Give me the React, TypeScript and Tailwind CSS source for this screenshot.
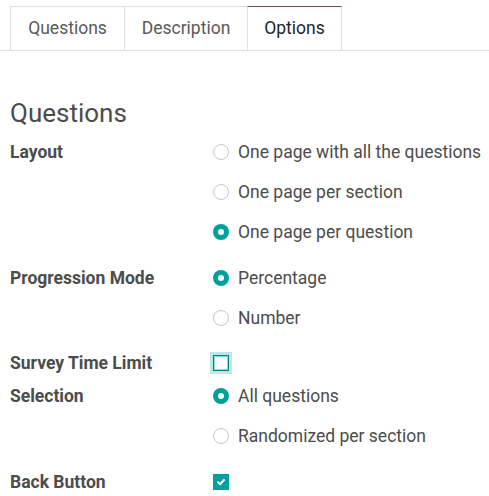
import React from "react";

type Opt = { label: string; checked?: boolean };

function Radio({ checked }: { checked?: boolean }) {
  return checked ? (
    <span className="w-4 h-4 rounded-full bg-[#00a09d] grid place-items-center shrink-0">
      <span className="w-[6px] h-[6px] rounded-full bg-white" />
    </span>
  ) : (
    <span className="w-4 h-4 rounded-full border border-[#c4c7cc] bg-white shrink-0" />
  );
}

function RadioField({ label, options, className = "" }: { label: string; options: Opt[]; className?: string }) {
  return (
    <div className={`flex ${className}`}>
      <div className="w-[203px] shrink-0 h-10 flex items-center font-bold text-[#4c4c4c]">{label}</div>
      <div className="flex flex-col">
        {options.map((o) => (
          <div key={o.label} className="h-10 flex items-center gap-[9px] text-[#4c4c4c] whitespace-nowrap">
            <Radio checked={o.checked} />
            <span>{o.label}</span>
          </div>
        ))}
      </div>
    </div>
  );
}

export default function App() {
  const tabs = [
    { name: "Questions", w: "w-[114px]" },
    { name: "Description", w: "w-[123px]" },
    { name: "Options", w: "w-[95px]", active: true },
  ];
  return (
    <div className="w-[489px] h-[496px] bg-white overflow-hidden text-[17.5px]" style={{ fontFamily: "Roboto, 'Noto Sans', sans-serif" }}>
      <div className="pt-[6px] border-b border-[#dee2e6] flex pl-[10px]">
        {tabs.map((t) =>
          t.active ? (
            <div
              key={t.name}
              className={`${t.w} h-[44px] -mb-px bg-white border-x border-[#dee2e6] border-t border-t-[#714b67] flex items-center justify-center text-[17.5px] text-[#212529]`}
            >
              {t.name}
            </div>
          ) : (
            <div
              key={t.name}
              className={`${t.w} h-[44px] border-l border-t border-[#dee2e6] flex items-center justify-center text-[17.5px] text-[#5a5a5a]`}
            >
              {t.name}
            </div>
          )
        )}
      </div>

      <div className="px-[10px]">
        <h2 className="text-[26px] leading-none text-[#4c4c4c] mt-[49px] mb-[6px]">Questions</h2>

        <RadioField
          label="Layout"
          options={[
            { label: "One page with all the questions" },
            { label: "One page per section" },
            { label: "One page per question", checked: true },
          ]}
        />
        <RadioField
          className="mt-[6px]"
          label="Progression Mode"
          options={[{ label: "Percentage", checked: true }, { label: "Number" }]}
        />

        <div className="flex mt-[12px] h-[26px] items-center">
          <div className="w-[203px] shrink-0 font-bold text-[#4c4c4c]">Survey Time Limit</div>
          <span className="w-4 h-4 border border-[#017e84] bg-white ring-[3px] ring-[#00a09d]/25 shadow-[inset_0_0_0_1px_rgba(0,200,200,0.5)]" />
        </div>

        <RadioField
          label="Selection"
          options={[{ label: "All questions", checked: true }, { label: "Randomized per section" }]}
        />

        <div className="flex mt-[6px] h-10 items-center">
          <div className="w-[203px] shrink-0 font-bold text-[#4c4c4c]">Back Button</div>
          <span className="w-4 h-4 bg-[#00a09d] grid place-items-center">
            <svg width="10" height="10" viewBox="0 0 10 10" fill="none" stroke="white" strokeWidth="2" strokeLinecap="round" strokeLinejoin="round">
              <polyline points="2 5.2 4.2 7.2 8 3" />
            </svg>
          </span>
        </div>
      </div>
    </div>
  );
}
